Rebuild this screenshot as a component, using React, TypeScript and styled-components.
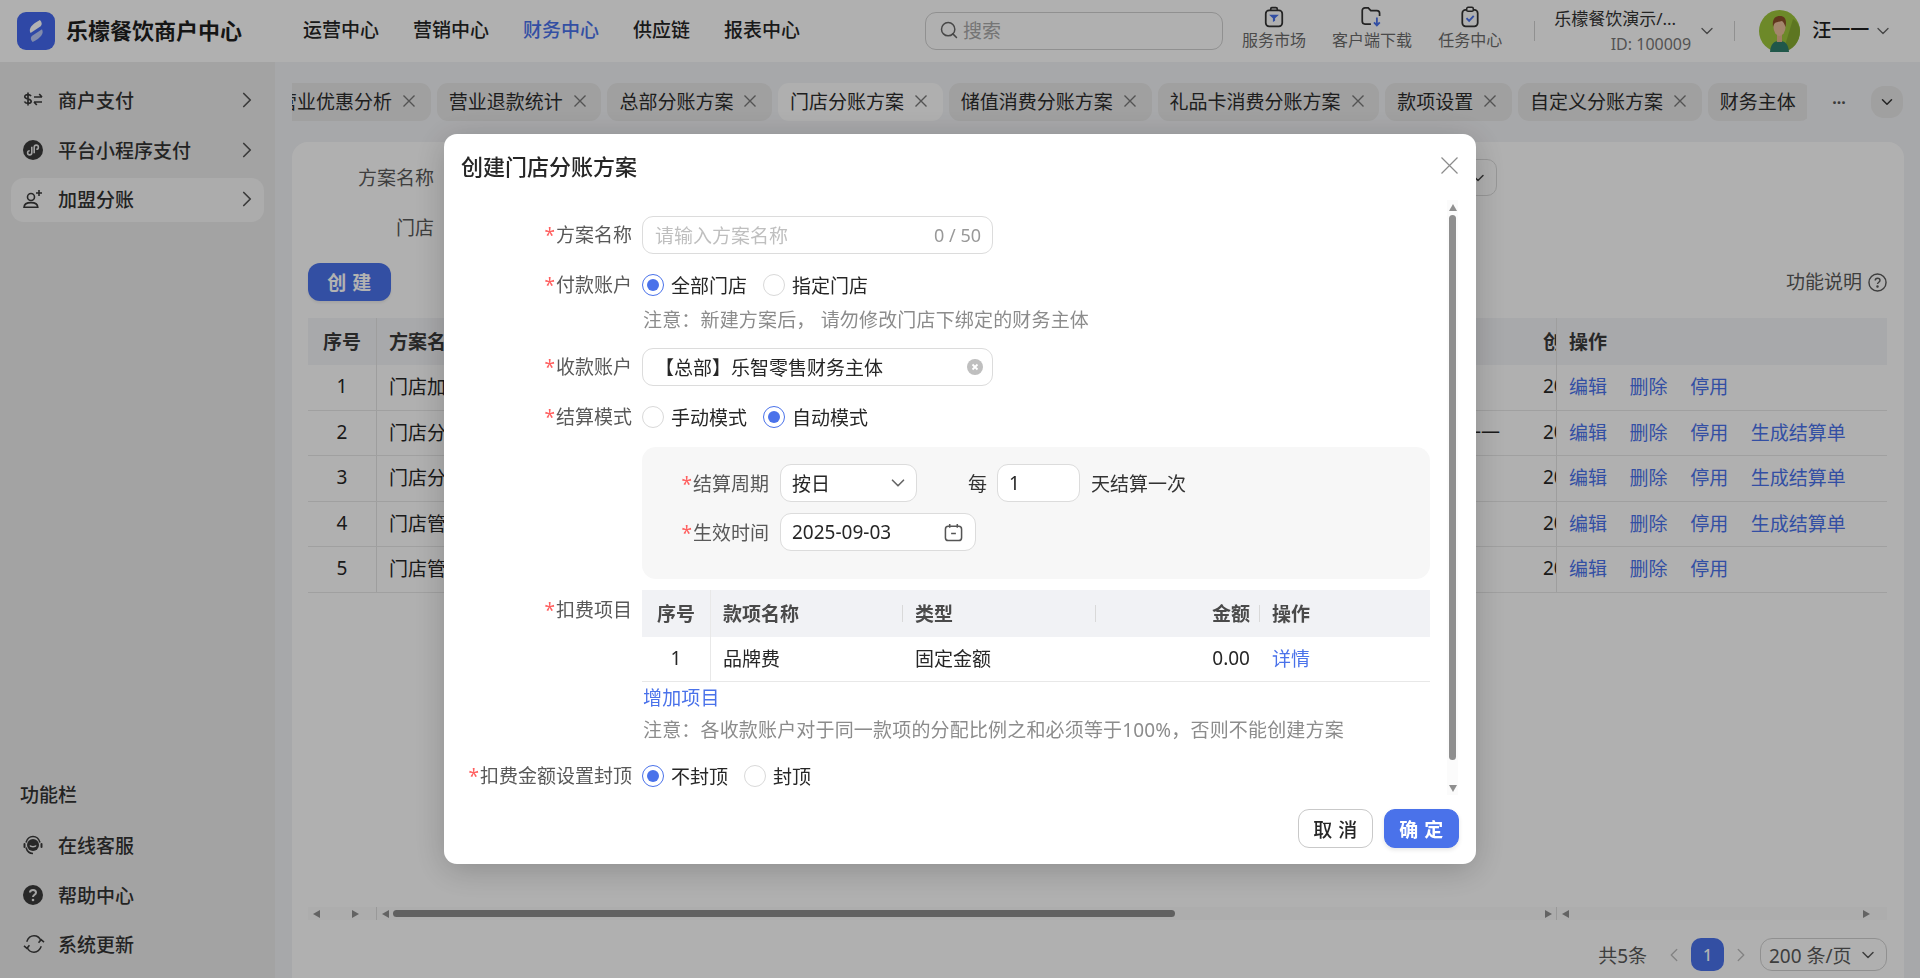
import { ReactNode } from "react";
import styled, { createGlobalStyle } from "styled-components";
import { ChevronDown, ChevronRight, ChevronLeft, Search } from "lucide-react";

const blue = "#4a72ea";
const font = `"Noto Sans", "Noto Sans CJK SC", sans-serif`;

const Global = createGlobalStyle`
    html, body { margin: 0; padding: 0; height: 100%; overflow: hidden; }
    body { font-family: ${font}; font-size: 19px; color: #262626; background: #fff; }
    * { box-sizing: border-box; }
`;

const Page = styled.div`
    width: 1920px;
    height: 978px;
    display: flex;
    flex-direction: column;
    overflow: hidden;
`;

/* ---------- top bar ---------- */
const Header = styled.header`
    height: 62px;
    flex: none;
    display: flex;
    align-items: center;
    padding-left: 17px;
    background: #fdfdfd;
`;

const BrandName = styled.div`
    margin-left: 11px;
    padding-bottom: 5px;
    font-size: 22px;
    font-weight: 600;
    color: #1f1f1f;
    white-space: nowrap;
`;

const Nav = styled.nav`
    display: flex;
    gap: 34px;
    margin-left: 61px;
    padding-bottom: 4px;
`;

const NavItem = styled.a<{ $active?: boolean }>`
    font-weight: 500;
    white-space: nowrap;
    color: ${(p) => (p.$active ? blue : "#262626")};
`;

const SearchBox = styled.div`
    width: 298px;
    height: 38px;
    margin-left: 125px;
    padding: 0 0 2px 13px;
    display: flex;
    align-items: center;
    gap: 4px;
    border: 1px solid #cfcfcf;
    border-radius: 11px;
    color: #a8a8a8;
    svg { color: #666; }
`;

const Tools = styled.div`
    display: flex;
    gap: 26px;
    margin-left: 19px;
`;

const Tool = styled.div`
    display: flex;
    flex-direction: column;
    align-items: center;
    gap: 1px;
    font-size: 16px;
    line-height: 22px;
    color: #6b6b6b;
    white-space: nowrap;
    padding-bottom: 5px;
`;

const VLine = styled.div<{ $left: number }>`
    width: 1px;
    height: 20px;
    margin-left: ${(p) => p.$left}px;
    background: #cfcfcf;
`;

const Account = styled.div`
    width: 137px;
    margin-left: 19px;
    display: flex;
    flex-direction: column;
    white-space: nowrap;
`;

const AccountName = styled.div`
    font-size: 17px;
    line-height: 26px;
    color: #333;
`;

const AccountId = styled.div`
    font-size: 16px;
    line-height: 24px;
    text-align: right;
    color: #777;
`;

const Chevron = styled(ChevronDown)<{ $left: number }>`
    flex: none;
    margin-left: ${(p) => p.$left}px;
    color: #666;
`;

const UserName = styled.div`
    margin-left: 12px;
    padding-bottom: 4px;
    font-weight: 500;
    color: #1f1f1f;
    white-space: nowrap;
`;

const AvatarWrap = styled.div`
    margin-left: 24px;
    line-height: 0;
`;

/* ---------- below the top bar ---------- */
const Body = styled.div`
    flex: 1;
    min-height: 0;
    display: flex;
`;

const Sidebar = styled.aside`
    width: 275px;
    flex: none;
    padding: 17px 11px 11px;
    display: flex;
    flex-direction: column;
    background: #eaeaea;
`;

const SideGroup = styled.div`
    display: flex;
    flex-direction: column;
    gap: 5.5px;
`;

const SideItem = styled.div<{ $active?: boolean }>`
    height: 44px;
    padding: 0 12px 2px;
    display: flex;
    align-items: center;
    border-radius: 13px;
    font-weight: 500;
    color: #333;
    background: ${(p) => (p.$active ? "#f7f7f7" : "transparent")};
`;

const SideIcon = styled.span`
    width: 20px;
    height: 20px;
    margin-right: 15px;
    line-height: 0;
    color: #3a3a3a;
`;

const SideArrow = styled(ChevronRight)`
    margin-left: auto;
    margin-right: -8px;
    color: #555;
`;

const SideTitle = styled.div`
    margin-top: auto;
    margin-left: 9px;
    margin-bottom: 16px;
    font-weight: 500;
    color: #333;
    line-height: 26px;
`;

const Main = styled.main`
    flex: 1;
    min-width: 0;
    display: flex;
    flex-direction: column;
    background: #f0f1f4;
`;

const TabBar = styled.div`
    height: 80px;
    flex: none;
    padding: 21px 17px 0;
    display: flex;
    align-items: flex-start;
`;

const TabViewport = styled.div`
    width: 1515px;
    flex: none;
    overflow: hidden;
`;

const TabTrack = styled.div`
    display: flex;
    gap: 6px;
    margin-left: -26px;
    width: max-content;
`;

const Tab = styled.div<{ $active?: boolean }>`
    height: 38px;
    padding: 0 15.7px 2px 12px;
    display: flex;
    align-items: center;
    gap: 11px;
    border-radius: 11px;
    white-space: nowrap;
    color: #2c2c2c;
    background: ${(p) => (p.$active ? "#fbfbfb" : "#e5e5e5")};
    svg { color: #777; }
`;

const TabMore = styled.div`
    width: 64px;
    height: 38px;
    flex: none;
    display: flex;
    align-items: center;
    justify-content: center;
    color: #555;
    font-size: 16px;
    font-weight: 700;
`;

const TabDrop = styled.div`
    width: 32px;
    height: 32px;
    flex: none;
    margin-top: 3px;
    display: flex;
    align-items: center;
    justify-content: center;
    border-radius: 13px;
    background: #e5e5e5;
    color: #333;
`;

const Card = styled.section`
    flex: 1;
    min-height: 0;
    margin: 0 16px 0 17px;
    padding: 17px 17px 7px 16px;
    display: flex;
    flex-direction: column;
    border-radius: 16px 16px 0 0;
    background: #fdfdfd;
`;

const FilterRow = styled.div`
    height: 37px;
    margin-bottom: 13px;
    display: flex;
    align-items: center;
`;

const FilterLabel = styled.div`
    width: 126px;
    padding-bottom: 1px;
    text-align: right;
    color: #595959;
`;

const FilterSelect = styled.div`
    width: 1053px;
    height: 37px;
    margin-left: 10px;
    padding-right: 8px;
    display: flex;
    align-items: center;
    justify-content: flex-end;
    border: 1px solid #d9d9d9;
    border-radius: 10px;
    color: #444;
`;

const ActionRow = styled.div`
    height: 38px;
    margin: 4px 0 17px;
    display: flex;
    align-items: center;
    justify-content: space-between;
`;

const PrimaryButton = styled.button`
    height: 38px;
    width: 83px;
    padding: 0;
    border: 0;
    border-radius: 12px;
    font-family: ${font};
    font-size: 19px;
    font-weight: 600;
    letter-spacing: 0.5px;
    color: #fff;
    background: ${blue};
    box-shadow: 0 2px 3px rgba(0, 0, 0, 0.08);
`;

const Help = styled.div`
    display: flex;
    align-items: center;
    gap: 6px;
    color: #595959;
    line-height: 0;
    span { line-height: 26px; }
`;

const TableWrap = styled.div`
    flex: 1;
    min-height: 0;
`;

const listColumns = "69px 723px 431px 26px 330px";

const ListRow = styled.div<{ $head?: boolean }>`
    display: grid;
    grid-template-columns: ${listColumns};
    height: ${(p) => (p.$head ? "47px" : "45.5px")};
    background: ${(p) => (p.$head ? "#f1f2f5" : "transparent")};
    border-bottom: ${(p) => (p.$head ? "0" : "1px solid #e6e6e6")};
    font-weight: ${(p) => (p.$head ? 700 : 400)};
    color: ${(p) => (p.$head ? "#3a3a3a" : "#262626")};
`;

const ListCell = styled.div<{ $kind?: "index" | "plain" | "right" | "clip" | "ops" }>`
    display: flex;
    align-items: center;
    white-space: nowrap;
    overflow: hidden;
    justify-content: ${(p) =>
        p.$kind === "index" ? "center" : p.$kind === "right" ? "flex-end" : "flex-start"};
    padding: ${(p) =>
        p.$kind === "index"
            ? "0 0 2px"
            : p.$kind === "right"
            ? "0 31px 2px 0"
            : "0 0 2px 12px"};
    border-right: ${(p) => (p.$kind === "index" || p.$kind === "clip" ? "1px solid #e3e3e3" : "0")};
    gap: 22.6px;
`;

const LinkText = styled.a`
    color: ${blue};
    white-space: nowrap;
`;

const HScroll = styled.div`
    height: 13px;
    flex: none;
    display: grid;
    grid-template-columns: 69px 1180px 330px;
    background: #f8f8f8;
`;

const HScrollPart = styled.div<{ $line?: boolean; $pr: number }>`
    display: flex;
    align-items: center;
    justify-content: space-between;
    padding: 0 ${(p) => p.$pr}px 0 5px;
    gap: 4px;
    border-right: ${(p) => (p.$line ? "1px solid #dcdcdc" : "0")};
`;

const HThumb = styled.div`
    width: 782px;
    height: 7px;
    margin-right: auto;
    border-radius: 4px;
    background: #8a8a8a;
`;

const Triangle = styled.i<{ $dir: "left" | "right" | "up" | "down" }>`
    flex: none;
    width: 0;
    height: 0;
    border-style: solid;
    border-color: transparent;
    ${(p) =>
        p.$dir === "left"
            ? "border-width: 4.5px 7px 4.5px 0; border-right-color: #8f8f8f;"
            : p.$dir === "right"
            ? "border-width: 4.5px 0 4.5px 7px; border-left-color: #8f8f8f;"
            : p.$dir === "up"
            ? "border-width: 0 4.5px 7px 4.5px; border-bottom-color: #8f8f8f;"
            : "border-width: 7px 4.5px 0 4.5px; border-top-color: #8f8f8f;"}
`;

const Pager = styled.div`
    height: 33px;
    margin-top: 18px;
    flex: none;
    display: flex;
    align-items: center;
    justify-content: flex-end;
    color: #595959;
`;

const PagerTotal = styled.div`
    margin-right: 14px;
`;

const PagerArrow = styled.span`
    width: 26px;
    display: flex;
    justify-content: center;
    color: #bdbdbd;
`;

const PageNum = styled.div`
    width: 33px;
    height: 33px;
    margin: 0 4px;
    display: flex;
    align-items: center;
    justify-content: center;
    border-radius: 10px;
    font-size: 16px;
    font-weight: 500;
    color: #fff;
    background: ${blue};
`;

const PageSize = styled.div`
    width: 127px;
    height: 33px;
    margin-left: 6px;
    padding-left: 8px;
    display: flex;
    align-items: center;
    gap: 6px;
    border: 1px solid #cfcfcf;
    border-radius: 12px;
    white-space: nowrap;
    color: #595959;
`;

/* ---------- dialog ---------- */
const Overlay = styled.div`
    position: fixed;
    inset: 0;
    display: flex;
    justify-content: center;
    padding-top: 134px;
    background: rgba(0, 0, 0, 0.3);
`;

const Modal = styled.div`
    width: 1032px;
    height: 730px;
    display: flex;
    flex-direction: column;
    border-radius: 13px;
    background: #fff;
    box-shadow: 0 6px 32px rgba(0, 0, 0, 0.22);
`;

const ModalHead = styled.div`
    height: 66px;
    flex: none;
    padding: 0 18px 3px 18px;
    display: flex;
    align-items: center;
    justify-content: space-between;
`;

const ModalTitle = styled.div`
    font-size: 22px;
    font-weight: 500;
    color: #262626;
    margin: 0 0 2px -1px;
`;

const CloseSlot = styled.span`
    line-height: 0;
    color: #8c8c8c;
`;

const ModalBody = styled.div`
    flex: 1;
    min-height: 0;
    display: flex;
    padding-right: 18px;
`;

const Form = styled.div`
    flex: 1;
    min-width: 0;
    padding: 16px 17px 0 0;
    overflow: hidden;
`;

const FormItem = styled.div<{ $top?: number }>`
    display: grid;
    grid-template-columns: 188px 1fr;
    column-gap: 10px;
    margin-top: ${(p) => p.$top ?? 0}px;
`;

const FormLabel = styled.label<{ $lh?: number }>`
    text-align: right;
    white-space: nowrap;
    color: #595959;
    line-height: ${(p) => p.$lh ?? 38}px;
`;

const Star = styled.span`
    color: #ff5f5f;
    margin-right: 1px;
`;

const FieldBox = styled.div`
    width: 351px;
    height: 38px;
    padding: 0 9px 0 12px;
    display: flex;
    align-items: center;
    justify-content: space-between;
    border: 1px solid #dcdcdc;
    border-radius: 11px;
    white-space: nowrap;
`;

const Placeholder = styled.span`
    color: #bfbfbf;
`;

const Counter = styled.span`
    margin-right: 2px;
    font-size: 18px;
    color: #999;
`;

const RadioGroup = styled.div<{ $gap: number }>`
    height: 38px;
    display: flex;
    align-items: center;
    gap: ${(p) => p.$gap}px;
`;

const RadioLabel = styled.div`
    display: flex;
    align-items: center;
    gap: 7px;
    white-space: nowrap;
`;

const RadioDot = styled.span<{ $on?: boolean }>`
    width: 22px;
    height: 22px;
    flex: none;
    display: flex;
    align-items: center;
    justify-content: center;
    border-radius: 50%;
    border: 1px solid ${(p) => (p.$on ? blue : "#d9d9d9")};
    &::after {
        content: "";
        width: 12px;
        height: 12px;
        border-radius: 50%;
        background: ${(p) => (p.$on ? blue : "transparent")};
    }
`;

const Hint = styled.div<{ $top: number }>`
    margin-top: ${(p) => p.$top}px;
    padding-left: 1px;
    line-height: 26px;
    letter-spacing: 0.17px;
    white-space: nowrap;
    color: #8c8c8c;
`;

const SettleBox = styled.div`
    margin-top: 11px;
    height: 132px;
    padding: 17px 0 0;
    display: flex;
    flex-direction: column;
    gap: 11px;
    border-radius: 14px;
    background: #f7f7f7;
`;

const SettleRow = styled.div`
    display: flex;
    align-items: center;
    height: 38px;
`;

const SettleLabel = styled.div`
    width: 127px;
    margin-right: 11px;
    text-align: right;
    white-space: nowrap;
    color: #595959;
`;

const WhiteField = styled.div<{ $w: number; $pr?: number }>`
    width: ${(p) => p.$w}px;
    height: 38px;
    flex: none;
    padding: 0 ${(p) => p.$pr ?? 9}px 0 11px;
    display: flex;
    align-items: center;
    justify-content: space-between;
    border: 1px solid #dcdcdc;
    border-radius: 11px;
    background: #fff;
`;

const PlainText = styled.span<{ $left: number; $right?: number }>`
    margin-left: ${(p) => p.$left}px;
    margin-right: ${(p) => p.$right ?? 0}px;
    white-space: nowrap;
    color: #333;
`;

const feeColumns = "69px 192px 193px 164px 170px";

const FeeRow = styled.div<{ $head?: boolean }>`
    display: grid;
    grid-template-columns: ${feeColumns};
    height: ${(p) => (p.$head ? "47px" : "45px")};
    background: ${(p) => (p.$head ? "#f1f2f5" : "transparent")};
    border-bottom: ${(p) => (p.$head ? "0" : "1px solid #e8e8e8")};
    font-weight: ${(p) => (p.$head ? 700 : 400)};
    color: ${(p) => (p.$head ? "#4a4a4a" : "#262626")};
`;

const FeeCell = styled.div<{ $kind?: "index" | "amount" | "text"; $sep?: boolean }>`
    display: flex;
    align-items: center;
    white-space: nowrap;
    justify-content: ${(p) =>
        p.$kind === "index" ? "center" : p.$kind === "amount" ? "flex-end" : "flex-start"};
    padding: ${(p) =>
        p.$kind === "index" ? "0 0 2px" : p.$kind === "amount" ? "0 10px 2px 0" : "0 0 2px 12px"};
    border-right: ${(p) => (p.$kind === "index" ? "1px solid #e8e8e8" : "0")};
    ${(p) =>
        p.$sep
            ? "background: linear-gradient(#d9d9d9, #d9d9d9) no-repeat right center / 1px 17px;"
            : ""}
`;

const ScrollTrack = styled.div`
    width: 11px;
    flex: none;
    padding: 4px 0 3px;
    display: flex;
    flex-direction: column;
    align-items: center;
    background: #fbfbfb;
`;

const ScrollThumb = styled.div`
    width: 7px;
    height: 545px;
    margin: 4px 0 auto;
    border-radius: 4px;
    background: #8f8f8f;
`;

const ModalFoot = styled.div`
    height: 69px;
    flex: none;
    padding: 14px 17px 0 0;
    display: flex;
    justify-content: flex-end;
    align-items: flex-start;
    gap: 11px;
`;

const FootButton = styled.button<{ $primary?: boolean }>`
    width: 75px;
    height: 39px;
    padding: 0;
    border-radius: 11px;
    font-family: ${font};
    font-size: 19px;
    font-weight: ${(p) => (p.$primary ? 600 : 500)};
    letter-spacing: 0.5px;
    color: ${(p) => (p.$primary ? "#fff" : "#262626")};
    background: ${(p) => (p.$primary ? blue : "#fff")};
    border: 1px solid ${(p) => (p.$primary ? blue : "#c9c9c9")};
    box-shadow: ${(p) => (p.$primary ? "0 2px 4px rgba(0,0,0,.1)" : "none")};
`;

/* ---------- drawings ---------- */
function CloseMark({ size, weight = 1.4 }: { size: number; weight?: number }) {
    return (
        <svg width={size} height={size} viewBox={`0 0 ${size} ${size}`} style={{ flex: "none" }}>
            <path d={`M0.5 0.5L${size - 0.5} ${size - 0.5}M${size - 0.5} 0.5L0.5 ${size - 0.5}`} stroke="currentColor" strokeWidth={weight} />
        </svg>
    );
}

const Logo = () => (
    <svg width="38" height="38" viewBox="0 0 38 38" style={{ flex: "none" }}>
        <rect width="38" height="38" rx="9" fill="#4468ee" />
        <g transform="translate(-5.700 0) scale(1.300 1)">
            <path d="M22 8C15.500 12.500 13 16.800 14.800 21L22.600 14.200C24 12.400 23.500 10 22 8Z" fill="#fff" />
            <path d="M16.400 30C22.600 25.800 25.400 21.600 23.600 17.200L15.800 24C14.400 25.800 15 28.200 16.400 30Z" fill="#b9c8f7" />
        </g>
    </svg>
);

const MarketIcon = () => (
    <svg width="22" height="22" viewBox="0 0 20 20" fill="none">
        <path d="M7 4V2.800C7 2 7.600 1.500 8.300 1.500h3.400c.7 0 1.300.5 1.300 1.300V4" stroke="#333" strokeWidth="1.500" />
        <rect x="2.500" y="4" width="15" height="14.500" rx="3" stroke="#333" strokeWidth="1.600" />
        <path d="M5.500 8h9L11 11.200v2.300L9 14.500v-3.300L5.500 8Z" fill={blue} />
    </svg>
);

const DownloadIcon = () => (
    <svg width="26" height="22" viewBox="0 0 24 20" fill="none">
        <path d="M11 16.500H5.500A2.500 2.500 0 0 1 3 14V4a2.500 2.500 0 0 1 2.500-2.500h3l2.400 2.600h5.600A2.500 2.500 0 0 1 19 6.600V9" stroke="#333" strokeWidth="1.600" />
        <path d="M16.500 10.500v7M13.800 15l2.700 2.800 2.700-2.800" stroke={blue} strokeWidth="1.700" />
    </svg>
);

const TaskIcon = () => (
    <svg width="22" height="22" viewBox="0 0 20 20" fill="none">
        <rect x="3" y="3.500" width="14" height="15" rx="3" stroke="#333" strokeWidth="1.600" />
        <rect x="7" y="1.200" width="6" height="3.600" rx="1.200" fill="#fdfdfd" stroke="#333" strokeWidth="1.400" />
        <path d="M6.800 11l2.400 2.600 4.200-4.600" stroke={blue} strokeWidth="1.700" />
    </svg>
);

const Avatar = () => (
    <svg width="41" height="42" viewBox="0 0 41 42">
        <ellipse cx="20.500" cy="21" rx="20.500" ry="21" fill="#9cc53b" />
        <path d="M24 42L34 9c5 3 7 8 7 12 0 11-7 19-17 21Z" fill="#86aa30" />
        <path d="M11 42c.5-8 4-11 9.500-11S29.500 34 30 42Z" fill="#2f7d6a" />
        <rect x="18" y="24" width="5" height="8" fill="#e4b58f" />
        <ellipse cx="20.500" cy="17" rx="6" ry="9" fill="#eac09c" />
        <path d="M14 17c-1-8 2-11 7-11s7 4 5.500 11c-1-3-2-5-3.500-6-3 1-6 1-7 2-1 1-1.500 2-2 4Z" fill="#8a4f2a" />
    </svg>
);

const PayIcon = () => (
    <svg viewBox="0 0 20 20" width="20" height="20" fill="none" stroke="currentColor" strokeWidth="1.700">
        <path d="M8 6.200C7.400 5 6.200 4.600 4.800 4.600 3 4.600 1.800 5.400 1.800 6.700c0 3 6.400 1.500 6.400 4.600 0 1.300-1.300 2.100-3.200 2.100-1.600 0-3-.6-3.500-1.900M5 2.600v13" />
        <path d="M11 7h8M16.200 4l2.800 3M19 12h-8M13.800 15l-2.800-3" />
    </svg>
);

const MiniIcon = () => (
    <svg viewBox="0 0 20 20" width="20" height="20">
        <circle cx="10" cy="10" r="10" fill="currentColor" />
        <path d="M8.800 6.800v6a2.100 2.100 0 1 1-2.100-2.100M11.200 13.200v-6a2.100 2.100 0 1 1 2.100 2.100" fill="none" stroke="#eaeaea" strokeWidth="1.600" />
    </svg>
);

const UserAddIcon = () => (
    <svg viewBox="0 0 20 20" width="20" height="20" fill="none" stroke="currentColor" strokeWidth="1.600">
        <circle cx="8" cy="8" r="3.500" />
        <path d="M1 18.200c.2-3.300 2.900-4.600 7-4.600s6.600 1.300 6.800 4.600H1Z" />
        <path d="M16 1v6M13 4h6" />
    </svg>
);

const ServiceIcon = () => (
    <svg viewBox="0 0 20 20" width="20" height="20" fill="none" stroke="currentColor" strokeWidth="1.600">
        <path d="M3 7.500C4 4 6.800 1.500 10 1.500s6 2.500 7 6M3 12.500c1 3.500 3.800 6 7 6" />
        <circle cx="10" cy="10" r="6" fill="currentColor" stroke="none" />
        <path d="M7 10.500c.7 1.600 5.300 1.600 6 0" stroke="#eaeaea" />
        <rect x="0.500" y="8" width="2" height="5" rx="1" fill="currentColor" stroke="none" />
        <rect x="17.500" y="8" width="2" height="5" rx="1" fill="currentColor" stroke="none" />
    </svg>
);

const HelpFillIcon = () => (
    <svg viewBox="0 0 20 20" width="20" height="20">
        <circle cx="10" cy="10" r="10" fill="currentColor" />
        <path d="M7 7.600C7 5.900 8.300 5 10 5s3 1 3 2.500c0 2.400-3 2.200-3 4.600" fill="none" stroke="#eaeaea" strokeWidth="2" />
        <circle cx="10" cy="15" r="1.300" fill="#eaeaea" />
    </svg>
);

const SyncIcon = () => (
    <svg viewBox="0 0 24 22" width="22" height="20" fill="none" stroke="currentColor" strokeWidth="1.600">
        <path d="M4 8.500C5.500 4.500 8.500 2 12 2c3.300 0 6.200 2 7.600 5.500M20 13.500c-1.500 4-4.500 6.500-8 6.500-3.300 0-6.200-2-7.600-5.500" />
        <path d="M1 13l3.200 2.800L7 12.500M23 9l-3.200-2.800L17 9.500" strokeWidth="1.700" />
    </svg>
);

const QuestionIcon = () => (
    <svg viewBox="0 0 20 20" width="19" height="19" fill="none" stroke="#595959" strokeWidth="1.500">
        <circle cx="10" cy="10" r="9" />
        <path d="M7.600 8c0-1.500 1.100-2.400 2.500-2.400s2.500.9 2.500 2.200c0 1.900-2.600 1.900-2.600 3.900" />
        <circle cx="10" cy="14.300" r=".6" fill="#595959" />
    </svg>
);

const CalendarIcon = () => (
    <svg viewBox="0 0 20 20" width="19" height="19" fill="none" stroke="#555" strokeWidth="1.600">
        <rect x="1.500" y="3.500" width="17" height="15" rx="3" />
        <path d="M6 1v4M14 1v4M7.500 11h5" />
    </svg>
);

const ClearIcon = () => (
    <svg viewBox="0 0 16 16" width="16" height="16">
        <circle cx="8" cy="8" r="8" fill="#bfbfbf" />
        <path d="M5.500 5.500l5 5M10.500 5.500l-5 5" stroke="#fff" strokeWidth="1.800" />
    </svg>
);

const tabs = [
    "营业优惠分析",
    "营业退款统计",
    "总部分账方案",
    "门店分账方案",
    "储值消费分账方案",
    "礼品卡消费分账方案",
    "款项设置",
    "自定义分账方案",
];

const plans = [
    { id: 1, name: "门店加盟分账", owner: "", more: false },
    { id: 2, name: "门店分账方案", owner: "汪一一", more: true },
    { id: 3, name: "门店分账方案", owner: "", more: true },
    { id: 4, name: "门店管理费", owner: "", more: true },
    { id: 5, name: "门店管理费", owner: "", more: false },
];

function Required({ children }: { children: ReactNode }) {
    return (
        <>
            <Star>*</Star>
            {children}
        </>
    );
}

function Radio({ on, children }: { on?: boolean; children: ReactNode }) {
    return (
        <RadioLabel>
            <RadioDot $on={on} />
            {children}
        </RadioLabel>
    );
}

export default function App() {
    return (
        <Page>
            <Global />
            <Header>
                <Logo />
                <BrandName>乐檬餐饮商户中心</BrandName>
                <Nav>
                    <NavItem>运营中心</NavItem>
                    <NavItem>营销中心</NavItem>
                    <NavItem $active>财务中心</NavItem>
                    <NavItem>供应链</NavItem>
                    <NavItem>报表中心</NavItem>
                </Nav>
                <SearchBox>
                    <Search size={20} strokeWidth={1.8} />
                    搜索
                </SearchBox>
                <Tools>
                    <Tool><MarketIcon />服务市场</Tool>
                    <Tool><DownloadIcon />客户端下载</Tool>
                    <Tool><TaskIcon />任务中心</Tool>
                </Tools>
                <VLine $left={32} />
                <Account>
                    <AccountName>乐檬餐饮演示/...</AccountName>
                    <AccountId>ID: 100009</AccountId>
                </Account>
                <Chevron $left={6} size={20} strokeWidth={1.6} />
                <VLine $left={17} />
                <AvatarWrap><Avatar /></AvatarWrap>
                <UserName>汪一一</UserName>
                <Chevron $left={4} size={20} strokeWidth={1.6} />
            </Header>
            <Body>
                <Sidebar>
                    <SideGroup>
                        <SideItem><SideIcon><PayIcon /></SideIcon>商户支付<SideArrow size={26} strokeWidth={1.6} /></SideItem>
                        <SideItem><SideIcon><MiniIcon /></SideIcon>平台小程序支付<SideArrow size={26} strokeWidth={1.6} /></SideItem>
                        <SideItem $active><SideIcon><UserAddIcon /></SideIcon>加盟分账<SideArrow size={26} strokeWidth={1.6} /></SideItem>
                    </SideGroup>
                    <SideTitle>功能栏</SideTitle>
                    <SideGroup>
                        <SideItem><SideIcon><ServiceIcon /></SideIcon>在线客服</SideItem>
                        <SideItem><SideIcon><HelpFillIcon /></SideIcon>帮助中心</SideItem>
                        <SideItem><SideIcon><SyncIcon /></SideIcon>系统更新</SideItem>
                    </SideGroup>
                </Sidebar>
                <Main>
                    <TabBar>
                        <TabViewport>
                            <TabTrack>
                                {tabs.map((t) => (
                                    <Tab key={t} $active={t === "门店分账方案"}>
                                        {t}
                                        <CloseMark size={12} />
                                    </Tab>
                                ))}
                                <Tab>财务主体</Tab>
                            </TabTrack>
                        </TabViewport>
                        <TabMore>···</TabMore>
                        <TabDrop><ChevronDown size={18} strokeWidth={2} /></TabDrop>
                    </TabBar>
                    <Card>
                        <FilterRow>
                            <FilterLabel>方案名称</FilterLabel>
                            <FilterSelect><ChevronDown size={20} strokeWidth={1.8} /></FilterSelect>
                        </FilterRow>
                        <FilterRow>
                            <FilterLabel>门店</FilterLabel>
                        </FilterRow>
                        <ActionRow>
                            <PrimaryButton>创 建</PrimaryButton>
                            <Help><span>功能说明</span><QuestionIcon /></Help>
                        </ActionRow>
                        <TableWrap>
                            <ListRow $head>
                                <ListCell $kind="index">序号</ListCell>
                                <ListCell>方案名称</ListCell>
                                <ListCell $kind="right" />
                                <ListCell $kind="clip">创建时间</ListCell>
                                <ListCell $kind="ops">操作</ListCell>
                            </ListRow>
                            {plans.map((p) => (
                                <ListRow key={p.id}>
                                    <ListCell $kind="index">{p.id}</ListCell>
                                    <ListCell>{p.name}</ListCell>
                                    <ListCell $kind="right">{p.owner}</ListCell>
                                    <ListCell $kind="clip">2025-09-03</ListCell>
                                    <ListCell $kind="ops">
                                        <LinkText>编辑</LinkText>
                                        <LinkText>删除</LinkText>
                                        <LinkText>停用</LinkText>
                                        {p.more && <LinkText>生成结算单</LinkText>}
                                    </ListCell>
                                </ListRow>
                            ))}
                        </TableWrap>
                        <HScroll>
                            <HScrollPart $line $pr={17}><Triangle $dir="left" /><Triangle $dir="right" /></HScrollPart>
                            <HScrollPart $line $pr={4}>
                                <Triangle $dir="left" />
                                <HThumb />
                                <Triangle $dir="right" />
                            </HScrollPart>
                            <HScrollPart $pr={17}><Triangle $dir="left" /><Triangle $dir="right" /></HScrollPart>
                        </HScroll>
                        <Pager>
                            <PagerTotal>共5条</PagerTotal>
                            <PagerArrow><ChevronLeft size={22} strokeWidth={1.5} /></PagerArrow>
                            <PageNum>1</PageNum>
                            <PagerArrow><ChevronRight size={22} strokeWidth={1.5} /></PagerArrow>
                            <PageSize>200 条/页<ChevronDown size={20} strokeWidth={1.8} /></PageSize>
                        </Pager>
                    </Card>
                </Main>
            </Body>
            <Overlay>
                <Modal>
                    <ModalHead>
                        <ModalTitle>创建门店分账方案</ModalTitle>
                        <CloseSlot><CloseMark size={17} weight={1.2} /></CloseSlot>
                    </ModalHead>
                    <ModalBody>
                        <Form>
                            <FormItem>
                                <FormLabel><Required>方案名称</Required></FormLabel>
                                <FieldBox>
                                    <Placeholder>请输入方案名称</Placeholder>
                                    <Counter>0 / 50</Counter>
                                </FieldBox>
                            </FormItem>
                            <FormItem $top={12}>
                                <FormLabel><Required>付款账户</Required></FormLabel>
                                <div>
                                    <RadioGroup $gap={16}>
                                        <Radio on>全部门店</Radio>
                                        <Radio>指定门店</Radio>
                                    </RadioGroup>
                                    <Hint $top={3}>注意：新建方案后， 请勿修改门店下绑定的财务主体</Hint>
                                </div>
                            </FormItem>
                            <FormItem $top={15}>
                                <FormLabel><Required>收款账户</Required></FormLabel>
                                <FieldBox>
                                    <span>【总部】乐智零售财务主体</span>
                                    <ClearIcon />
                                </FieldBox>
                            </FormItem>
                            <FormItem $top={12}>
                                <FormLabel><Required>结算模式</Required></FormLabel>
                                <div>
                                    <RadioGroup $gap={16}>
                                        <Radio>手动模式</Radio>
                                        <Radio on>自动模式</Radio>
                                    </RadioGroup>
                                    <SettleBox>
                                        <SettleRow>
                                            <SettleLabel><Required>结算周期</Required></SettleLabel>
                                            <WhiteField $w={137} $pr={7}>按日<ChevronDown size={22} strokeWidth={1.8} color="#666" /></WhiteField>
                                            <PlainText $left={51} $right={10}>每</PlainText>
                                            <WhiteField $w={83}>1</WhiteField>
                                            <PlainText $left={11}>天结算一次</PlainText>
                                        </SettleRow>
                                        <SettleRow>
                                            <SettleLabel><Required>生效时间</Required></SettleLabel>
                                            <WhiteField $w={196} $pr={12}>2025-09-03<CalendarIcon /></WhiteField>
                                        </SettleRow>
                                    </SettleBox>
                                </div>
                            </FormItem>
                            <FormItem $top={11}>
                                <FormLabel $lh={40}><Required>扣费项目</Required></FormLabel>
                                <div>
                                    <FeeRow $head>
                                        <FeeCell $kind="index">序号</FeeCell>
                                        <FeeCell $sep>款项名称</FeeCell>
                                        <FeeCell $sep>类型</FeeCell>
                                        <FeeCell $kind="amount" $sep>金额</FeeCell>
                                        <FeeCell>操作</FeeCell>
                                    </FeeRow>
                                    <FeeRow>
                                        <FeeCell $kind="index">1</FeeCell>
                                        <FeeCell>品牌费</FeeCell>
                                        <FeeCell>固定金额</FeeCell>
                                        <FeeCell $kind="amount">0.00</FeeCell>
                                        <FeeCell><LinkText>详情</LinkText></FeeCell>
                                    </FeeRow>
                                    <Hint $top={3}><LinkText>增加项目</LinkText></Hint>
                                    <Hint $top={6}>注意：各收款账户对于同一款项的分配比例之和必须等于100%，否则不能创建方案</Hint>
                                </div>
                            </FormItem>
                            <FormItem $top={14}>
                                <FormLabel><Required>扣费金额设置封顶</Required></FormLabel>
                                <RadioGroup $gap={16}>
                                    <Radio on>不封顶</Radio>
                                    <Radio>封顶</Radio>
                                </RadioGroup>
                            </FormItem>
                        </Form>
                        <ScrollTrack>
                            <Triangle $dir="up" />
                            <ScrollThumb />
                            <Triangle $dir="down" />
                        </ScrollTrack>
                    </ModalBody>
                    <ModalFoot>
                        <FootButton>取 消</FootButton>
                        <FootButton $primary>确 定</FootButton>
                    </ModalFoot>
                </Modal>
            </Overlay>
        </Page>
    );
}
